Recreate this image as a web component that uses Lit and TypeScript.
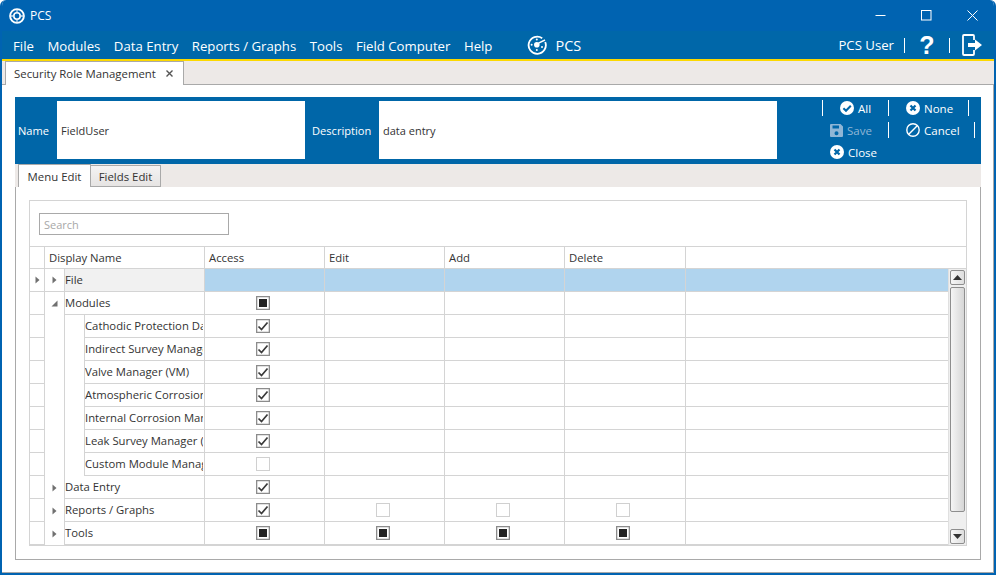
import { LitElement, html, css } from "lit";
import { customElement } from "lit/decorators.js";

const titleLogo = html`<svg width="16" height="16" viewBox="0 0 16 16" fill="none" stroke="#fff">
  <circle cx="8" cy="8" r="6.9" stroke-width="1.9"/>
  <circle cx="8" cy="8" r="3.2" stroke-width="1.6"/>
  <path d="M8 1.5 V4.5 M8 11.5 V14.5 M1.5 8 H4.5 M11.5 8 H14.5" stroke-width="1.3" stroke="#cfe2f2"/>
</svg>`;

const logo = html`<svg width="20" height="20" viewBox="0 0 20 20" fill="none" stroke="#fff">
  <path d="M15.2 3.2 A8.6 8.6 0 1 0 18.2 7" stroke-width="1.8"/>
  <circle cx="9.8" cy="9.8" r="2.8" fill="#fff" stroke="none"/>
  <circle cx="9.8" cy="4.6" r="1" fill="#fff" stroke="none"/>
  <circle cx="4.6" cy="9.8" r="1" fill="#fff" stroke="none"/>
  <circle cx="9.8" cy="15" r="1" fill="#fff" stroke="none"/>
  <circle cx="15" cy="12" r="1" fill="#fff" stroke="none"/>
  <path d="M11.5 8.2 L18 5" stroke-width="1.4"/>
</svg>`;

const checkCircle = html`<svg width="14" height="14" viewBox="0 0 14 14"><circle cx="7" cy="7" r="7" fill="#fff"/><path d="M3.4 7.2 L6 9.8 L10.8 4.8" fill="none" stroke="#0066a8" stroke-width="2"/></svg>`;
const xCircle = html`<svg width="14" height="14" viewBox="0 0 14 14"><circle cx="7" cy="7" r="7" fill="#fff"/><path d="M4.5 4.5 L9.5 9.5 M9.5 4.5 L4.5 9.5" fill="none" stroke="#0066a8" stroke-width="2.2"/></svg>`;
const ban = html`<svg width="14" height="14" viewBox="0 0 14 14" fill="none" stroke="#fff" stroke-width="1.4"><circle cx="7" cy="7" r="6.2"/><path d="M2.8 11.2 L11.2 2.8"/></svg>`;
const floppy = html`<svg width="13" height="13" viewBox="0 0 13 13"><path fill-rule="evenodd" d="M0 1 Q0 0 1 0 H10.5 L13 2.5 V12 Q13 13 12 13 H1 Q0 13 0 12 Z M2.5 1.5 V4.5 H9 V1.5 Z M6.5 7.2 A2 2 0 1 0 6.5 11.2 A2 2 0 1 0 6.5 7.2 Z" fill="#8fb6d6"/></svg>`;
const exitIcon = html`<svg width="21" height="22" viewBox="0 0 21 22" fill="none" stroke="#fff" stroke-width="1.8"><path d="M12 6 V2 Q12 1 11 1 H2 Q1 1 1 2 V20 Q1 21 2 21 H11 Q12 21 12 20 V16"/><path d="M6 9 H13 V5.5 L20 11 L13 16.5 V13 H6 Z" fill="#fff" stroke="none"/></svg>`;

type C = "" | "check" | "square" | "empty";
interface Row { name: string; level: 0 | 1; exp?: "closed" | "open"; cells: C[]; selected?: boolean }

const rows: Row[] = [
  { name: "File", level: 0, exp: "closed", cells: ["", "", "", ""], selected: true },
  { name: "Modules", level: 0, exp: "open", cells: ["square", "", "", ""] },
  { name: "Cathodic Protection Data Manager", level: 1, cells: ["check", "", "", ""] },
  { name: "Indirect Survey Manager (ISM)", level: 1, cells: ["check", "", "", ""] },
  { name: "Valve Manager (VM)", level: 1, cells: ["check", "", "", ""] },
  { name: "Atmospheric Corrosion Manager", level: 1, cells: ["check", "", "", ""] },
  { name: "Internal Corrosion Manager", level: 1, cells: ["check", "", "", ""] },
  { name: "Leak Survey Manager (LSM)", level: 1, cells: ["check", "", "", ""] },
  { name: "Custom Module Manager", level: 1, cells: ["empty", "", "", ""] },
  { name: "Data Entry", level: 0, exp: "closed", cells: ["check", "", "", ""] },
  { name: "Reports / Graphs", level: 0, exp: "closed", cells: ["check", "empty", "empty", "empty"] },
  { name: "Tools", level: 0, exp: "closed", cells: ["square", "square", "square", "square"] },
];

@customElement("app-root")
export class AppRoot extends LitElement {
  static styles = css`
    :host { display: block; width: 996px; height: 575px; font-family: "Open Sans", "Noto Sans", sans-serif; color: #333; background: #fff; }
    * { box-sizing: border-box; }
    .window { width: 996px; height: 575px; display: flex; flex-direction: column; border: solid #0063b1; border-width: 0 2px 2px 2px; border-radius: 6px 6px 0 0; overflow: hidden; background: #fff; }
    .title { height: 31px; flex: none; margin: 0 -2px; background: #0063b1; color: #fff; display: flex; align-items: center; padding-left: 9px; gap: 5px; font-size: 12px; }
    .winbtns { margin-left: auto; display: flex; align-items: center; padding-right: 1px; }
    .winbtn { width: 46px; height: 31px; display: flex; align-items: center; justify-content: center; }
    .menu { height: 28px; flex: none; margin: 0 -2px; background: #0067a9; color: #fff; display: flex; align-items: center; padding: 2px 0 0 13px; font-size: 13.2px; }
    .menu span.m { margin-right: 13.5px; white-space: nowrap; }
    .center { display: flex; align-items: center; gap: 8px; margin: -2px 0 0 21.5px; font-size: 14.5px; }
    .right { margin-left: auto; display: flex; align-items: center; margin-top: -2px; }
    .user { font-size: 13.2px; padding-right: 10px; border-right: 1px solid #fff; line-height: 15px; }
    .help { width: 45px; text-align: center; font-size: 25px; font-weight: 700; border-right: 1px solid #fff; line-height: 15px; height: 15px; display: flex; align-items: center; justify-content: center; font-family: "Liberation Sans", sans-serif; }
    .exit { display: flex; padding: 0 13px 0 12px; }
    .yellow { height: 2px; flex: none; margin: 0 -2px; background: #fcd800; }
    .strip { height: 24px; flex: none; background: #ede9e7; border-bottom: 1px solid #a9a9a9; padding-left: 3px; display: flex; }
    .tab { width: 179px; height: 24px; background: #fff; border: 1px solid #a9a9a9; border-bottom: none; display: flex; align-items: center; padding-left: 8px; font-size: 11.4px; color: #333; white-space: nowrap; }
    .tab .x { margin-left: 10px; display: flex; }
    .content { flex: 1; min-height: 0; padding: 12px 13px 12px 13px; display: flex; flex-direction: column; border-right: 1px solid #a9a9a9; border-bottom: 1px solid #a9a9a9; }
    .panel { height: 67px; flex: none; background: #0066a8; display: flex; align-items: flex-start; color: #fff; font-size: 11.1px; font-weight: 500; width: 966px; padding-top: 4px; }
    .panel label { white-space: nowrap; height: 58px; display: flex; align-items: center; }
    .name-l { width: 42px; padding-left: 3px; }
    .input { height: 58px; background: #fff; color: #333; font-weight: 400; font-size: 11px; display: flex; align-items: center; padding-left: 4px; }
    .i1 { width: 248px; }
    .desc-l { width: 74px; padding-left: 7px; }
    .i2 { width: 398px; }
    .actions { margin: -1px 0 0 45px; display: flex; flex-direction: column; gap: 6px; font-size: 11.5px; }
    .arow { display: flex; height: 16px; }
    .cell { display: flex; align-items: center; gap: 4px; white-space: nowrap; }
    .c1 { width: 66px; }
    .c2 { border-left: 1px solid #fff; border-right: 1px solid #fff; padding-left: 17px; }
    .all { border-left: 1px solid #fff; padding-left: 17px; }
    .pl { padding-left: 8px; }
    .w1 { width: 81px; }
    .w2 { width: 87px; }
    .off { color: #8fb6d6; }
    .subtabs { height: 23px; flex: none; background: #ede9e7; display: flex; padding-left: 3px; width: 966px; position: relative; z-index: 1; }
    .st { height: 23px; font-size: 11.4px; display: flex; align-items: center; justify-content: center; border: 1px solid #a9a9a9; }
    .st.on { width: 73px; background: #fff; border-bottom: none; }
    .st.offt { width: 71px; height: 22px; margin: 1px 0 0 -1px; background: linear-gradient(#f4f3f3, #e6e4e3); }
    .tabbody { flex: 1; min-height: 0; width: 966px; border: 1px solid #a9a9a9; margin-top: -1px; padding: 13px; }
    .box { height: 100%; border: 1px solid #d4d4d4; display: flex; flex-direction: column; overflow: hidden; }
    .search { flex: none; padding: 12px 0 11px 9px; }
    .search div { width: 190px; height: 22px; border: 1px solid #a9a9a9; font-size: 11px; color: #a8a8a8; display: flex; align-items: center; padding-left: 4px; }
    .grid { flex: 1; min-height: 0; border-top: 1px solid #d4d4d4; position: relative; overflow: hidden; font-size: 11.3px; color: #333; }
    .r { display: grid; grid-template-columns: 15px 20px 20px 120px 120px 120px 120px 121px 1fr; height: 23px; }
    .r.h { height: 22px; }
    .r > div { border-right: 1px solid #d4d4d4; border-bottom: 1px solid #d4d4d4; display: flex; align-items: center; min-width: 0; overflow: hidden; white-space: nowrap; }
    .r.h .dn { grid-column: 2 / 5; padding-left: 4px; }
    .r.h .hc { padding-left: 4px; }
    .r > .last { border-right: none; }
    .r > .nb { border-bottom: none; }
    .r > .center-c { justify-content: center; padding-right: 3px; }
    .r > .center-c:nth-last-child(2) { padding-right: 4px; }
    .r > .name { padding: 0 0 2px 0; }
    .clip { display: block; width: 100%; overflow: hidden; padding-right: 0; }
    .name.l1 .clip { width: 118px; }
    .name.sel { background: #f1f1f1; }
    .name.l0 { grid-column: 3 / 5; }
    .selcell { background: #b0d4ee; }
    .r > .exp { justify-content: center; }
    .cb { width: 14px; height: 14px; border: 1px solid #8c8c8c; box-shadow: inset 0 0 0 0.3px #8c8c8c; display: flex; align-items: center; justify-content: center; background: #fff; }
    .cb.empty { border-color: #d0d0d0; box-shadow: none; }
    .cb i { width: 8px; height: 8px; background: #222; display: block; }
    .scroll { position: absolute; right: 0; top: 22px; bottom: 0; width: 18px; background: #efefef; border-left: 1px solid #e0e0e0; }
    .sb { position: absolute; left: 1px; width: 15px; background: linear-gradient(90deg, #f7f7f7, #dedede); border: 1px solid #8e8e8e; border-radius: 2px; display: flex; align-items: center; justify-content: center; }
    .up { top: 1px; height: 15px; }
    .thumb { top: 18px; height: 225px; background: linear-gradient(90deg, #f5f5f5, #d6d6d6); }
    .dn-b { bottom: 1px; height: 15px; }
  `;

  private tri(kind: "closed" | "open") {
    return kind === "closed"
      ? html`<svg width="5" height="8" viewBox="0 0 5 8"><path d="M0.5 0.5 L4.5 4 L0.5 7.5 Z" fill="#707070"/></svg>`
      : html`<svg width="7" height="7" viewBox="0 0 7 7"><path d="M6.5 0.5 V6.5 H0.5 Z" fill="#707070"/></svg>`;
  }

  private cb(c: C) {
    if (!c) return "";
    return html`<span class="cb ${c === "empty" ? "empty" : ""}">
      ${c === "square" ? html`<i></i>` : ""}
      ${c === "check"
        ? html`<svg width="12" height="12" viewBox="0 0 12 12"><path d="M1.5 6.5 L4.5 9.5 L10.5 2.5" fill="none" stroke="#3a3a3a" stroke-width="1.7"/></svg>`
        : ""}
    </span>`;
  }

  private row(r: Row) {
    const sel = r.selected ? "selcell" : "";
    return html`<div class="r">
      <div class="exp">${r.selected ? this.tri("closed") : ""}</div>
      <div class="exp ${r.selected ? "" : "nb"}">${r.exp ? this.tri(r.exp) : ""}</div>
      ${r.level === 0
        ? html`<div class="name l0 ${r.selected ? "sel" : ""}">${r.name}</div>`
        : html`<div class="nb"></div><div class="name l1"><span class="clip">${r.name}</span></div>`}
      ${r.cells.map((c) => html`<div class="center-c ${sel}">${this.cb(c)}</div>`)}
      <div class="last ${sel}"></div>
    </div>`;
  }

  render() {
    return html`<div class="window">
      <div class="title">
        ${titleLogo}<span>PCS</span>
        <div class="winbtns">
          <div class="winbtn"><svg width="11" height="11" viewBox="0 0 11 11"><path d="M0.5 5.5 H10.5" stroke="#fff"/></svg></div>
          <div class="winbtn"><svg width="11" height="11" viewBox="0 0 11 11"><rect x="0.5" y="0.5" width="9.5" height="9.5" fill="none" stroke="#fff"/></svg></div>
          <div class="winbtn"><svg width="11" height="11" viewBox="0 0 11 11"><path d="M0.5 0.5 L10.5 10.5 M10.5 0.5 L0.5 10.5" stroke="#fff"/></svg></div>
        </div>
      </div>
      <div class="menu">
        <span class="m">File</span><span class="m">Modules</span><span class="m">Data Entry</span><span class="m">Reports / Graphs</span><span class="m">Tools</span><span class="m">Field Computer</span><span class="m">Help</span>
        <div class="center">${logo}<span>PCS</span></div>
        <div class="right">
          <span class="user">PCS User</span>
          <span class="help">?</span>
          <span class="exit">${exitIcon}</span>
        </div>
      </div>
      <div class="yellow"></div>
      <div class="strip">
        <div class="tab">Security Role Management<span class="x"><svg width="7" height="7" viewBox="0 0 7 7"><path d="M0.5 0.5 L6.5 6.5 M6.5 0.5 L0.5 6.5" stroke="#555" stroke-width="1.4"/></svg></span></div>
      </div>
      <div class="content">
        <div class="panel">
          <label class="name-l">Name</label>
          <div class="input i1">FieldUser</div>
          <label class="desc-l">Description</label>
          <div class="input i2">data entry</div>
          <div class="actions">
            <div class="arow">
              <div class="cell c1 all">${checkCircle}All</div>
              <div class="cell c2 w1">${xCircle}None</div>
            </div>
            <div class="arow">
              <div class="cell c1 pl off">${floppy}Save</div>
              <div class="cell c2 w2">${ban}Cancel</div>
            </div>
            <div class="arow">
              <div class="cell c1 pl">${xCircle}Close</div>
            </div>
          </div>
        </div>
        <div class="subtabs">
          <div class="st on">Menu Edit</div>
          <div class="st offt">Fields Edit</div>
        </div>
        <div class="tabbody">
          <div class="box">
            <div class="search"><div>Search</div></div>
            <div class="grid">
              <div class="r h">
                <div></div>
                <div class="dn">Display Name</div>
                <div class="hc">Access</div>
                <div class="hc">Edit</div>
                <div class="hc">Add</div>
                <div class="hc">Delete</div>
                <div class="last"></div>
              </div>
              ${rows.map((r) => this.row(r))}
              <div class="r">
                <div></div><div class="nb"></div><div class="name l0"></div><div></div><div></div><div></div><div></div><div class="last"></div>
              </div>
              <div class="scroll">
                <div class="sb up"><svg width="9" height="5" viewBox="0 0 9 5"><path d="M0 5 L4.5 0 L9 5 Z" fill="#333"/></svg></div>
                <div class="sb thumb"></div>
                <div class="sb dn-b"><svg width="9" height="5" viewBox="0 0 9 5"><path d="M0 0 L4.5 5 L9 0 Z" fill="#333"/></svg></div>
              </div>
            </div>
          </div>
        </div>
      </div>
    </div>`;
  }
}
